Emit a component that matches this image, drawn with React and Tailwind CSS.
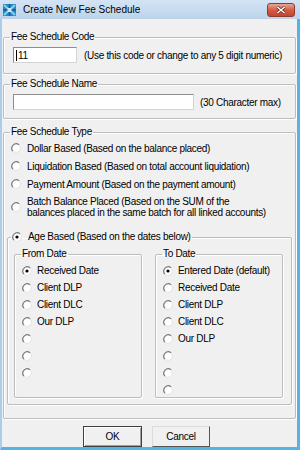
import React from "react";

function Radio({ checked }) {
  return (
    <svg width="10" height="10" viewBox="0 0 10 10" className="shrink-0">
      <circle cx="5" cy="5" r="4.4" fill="#fff" stroke="#e2e2e2" strokeWidth="1" />
      <path d="M8.1 1.9A4.4 4.4 0 0 0 1.9 8.1" fill="none" stroke="#7a7a7a" strokeWidth="1.2" />
      {checked && <circle cx="5" cy="5" r="1.6" fill="#000" />}
    </svg>
  );
}

function Option({ checked, label }) {
  return (
    <div className="flex items-center h-[17px] pl-[7px] gap-[5px]">
      <Radio checked={checked} />
      <span>{label}</span>
    </div>
  );
}

function TypeRow({ checked, children, tall }) {
  return (
    <div className={`flex items-center pl-[7px] gap-[6px] ${tall ? "h-[28px]" : "h-[18px]"}`}>
      <Radio checked={checked} />
      <span className="leading-[11px]">{children}</span>
    </div>
  );
}

function TextBox({ width, children }) {
  return (
    <div
      className={`${width} h-[16px] bg-white border border-[#d4d4d4] border-t-[#8d8d8d] border-l-[#8d8d8d] flex items-center pl-[2px]`}
    >
      {children}
    </div>
  );
}

function AppIcon() {
  return (
    <svg width="13" height="12" viewBox="0 0 13 12">
      <rect x="0" y="0" width="13" height="12" fill="#2a86c4" />
      <path d="M1 1L12 11M12 1L1 11" stroke="#7fd0ef" strokeWidth="2.2" />
      <path d="M6.5 0V12M0 6H13" stroke="#155d98" strokeWidth="1.4" />
      <rect x="4.5" y="4" width="4" height="4" fill="#c9ecf8" />
    </svg>
  );
}

const group = "border border-[#bdbdbd] rounded-[2px] shadow-[1px_1px_0_#fff,inset_1px_1px_0_#fff]";

export default function App() {
  const fromDates = ["Received Date", "Client DLP", "Client DLC", "Our DLP", "", "", ""];
  const toDates = ["Entered Date (default)", "Received Date", "Client DLP", "Client DLC", "Our DLP", "", "", ""];

  return (
    <div className="w-[300px] h-[450px] flex flex-col bg-[#c3d8ee] text-black text-[10px] tracking-[-0.3px] font-['Liberation_Sans',Arial,sans-serif]">
      <div className="h-[19px] flex items-center bg-gradient-to-b from-[#d4e4f5] to-[#bcd3eb] pl-[3px]">
        <AppIcon />
        <span className="ml-[7px] text-[10px] tracking-normal">Create New Fee Schedule</span>
        <div className="ml-auto mr-[5px] w-[28px] h-[14px] rounded-[3px] border border-[#8c3b2c] bg-gradient-to-b from-[#e8a696] via-[#d15c45] to-[#c7432d] flex items-center justify-center">
          <svg width="10" height="8" viewBox="0 0 10 8">
            <path d="M1.5 1L8.5 7M8.5 1L1.5 7" stroke="#5a1d12" strokeWidth="2.8" />
            <path d="M1.5 1L8.5 7M8.5 1L1.5 7" stroke="#fff" strokeWidth="1.6" />
          </svg>
        </div>
      </div>

      <div className="flex-1 flex flex-col bg-[#f0f0f0] border-l-2 border-l-[#aacdea] border-r-[3px] border-r-[#56b3e6] border-b-[3px] border-b-[#56b3e6]">
        <fieldset className={`mx-[1px] mt-[12px] h-[43px] ${group}`}>
          <legend className="ml-[6px] px-[1px] leading-[12px]">Fee Schedule Code</legend>
          <div className="flex items-center mt-[4px] ml-[9px]">
            <TextBox width="w-[64px]">
              <span className="w-[1px] h-[11px] bg-black mr-[1px]" />
              <span>11</span>
            </TextBox>
            <span className="ml-[7px]">(Use this code or change to any 5 digit numeric)</span>
          </div>
        </fieldset>

        <fieldset className={`mx-[1px] mt-[4px] h-[41px] ${group}`}>
          <legend className="ml-[6px] px-[1px] leading-[12px]">Fee Schedule Name</legend>
          <div className="flex items-center mt-[4px] ml-[9px]">
            <TextBox width="w-[181px]" />
            <span className="ml-[6px]">(30 Character max)</span>
          </div>
        </fieldset>

        <fieldset className={`mx-[1px] mt-[7px] h-[293px] ${group}`}>
          <legend className="ml-[6px] px-[1px] leading-[12px]">Fee Schedule Type</legend>
          <div className="mt-[1px]">
            <TypeRow>Dollar Based (Based on the balance placed)</TypeRow>
            <TypeRow>Liquidation Based (Based on total account liquidation)</TypeRow>
            <TypeRow>Payment Amount (Based on the payment amount)</TypeRow>
            <TypeRow tall>
              Batch Balance Placed (Based on the SUM of the
              <br />
              balances placed in the same batch for all linked accounts)
            </TypeRow>
          </div>

          <fieldset className={`ml-[3px] mr-[3px] mt-[9px] h-[175px] ${group}`}>
            <legend className="ml-[3px] px-[1px] leading-[14px] flex items-center gap-[6px]">
              <Radio checked />
              <span>Age Based (Based on the dates below)</span>
            </legend>
            <div className="flex mt-[4px] ml-[6px] gap-[13px]">
              <fieldset className={`w-[128px] h-[150px] ${group}`}>
                <legend className="ml-[6px] px-[1px] leading-[12px]">From Date</legend>
                <div className="mt-[2px]">
                  {fromDates.map((d, i) => (
                    <Option key={i} checked={i === 0} label={d} />
                  ))}
                </div>
              </fieldset>
              <fieldset className={`w-[128px] h-[150px] ${group}`}>
                <legend className="ml-[6px] px-[1px] leading-[12px]">To Date</legend>
                <div className="mt-[2px]">
                  {toDates.map((d, i) => (
                    <Option key={i} checked={i === 0} label={d} />
                  ))}
                </div>
              </fieldset>
            </div>
          </fieldset>
        </fieldset>

        <div className="flex mt-[7px] ml-[81px] gap-[10px]">
          <button className="w-[59px] h-[21px] bg-[#f0f0f0] border border-[#3f3f3f] shadow-[inset_1px_1px_0_#fff,inset_-1px_-1px_0_#a0a0a0] flex items-center justify-center">
            OK
          </button>
          <button className="w-[58px] h-[21px] bg-[#f0f0f0] border border-[#dcdcdc] border-r-[#555] border-b-[#555] flex items-center justify-center">
            Cancel
          </button>
        </div>
      </div>
    </div>
  );
}
